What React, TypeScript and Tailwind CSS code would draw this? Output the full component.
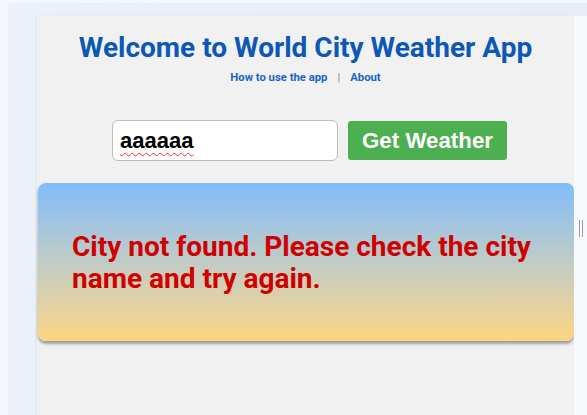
import React from "react";

export default function App() {
  return (
    <div className="w-[587px] h-[415px] overflow-hidden bg-[#f4f7fd] pt-[3px] pl-[8px]" style={{ fontFamily: "Roboto, 'Liberation Sans', sans-serif" }}>
      <div className="h-full bg-gradient-to-r from-[#ebf0f9] to-[#e6ecf8] pt-[13px] pl-[29px] flex">
        <div className="w-[537px] h-[500px] bg-[#f1f1f1] shadow-[-1px_0_2px_rgba(0,0,0,0.06)] flex flex-col items-center">
          <h1 className="mt-[15px] text-[28px] leading-[34px] font-bold text-[#0b58b6]" style={{ fontFamily: "Roboto, sans-serif" }}>
            Welcome to World City Weather App
          </h1>
          <div className="mt-[6px] flex items-center text-[11.3px] leading-[14px] font-bold text-[#1a63cc]">
            <span>How to use the app</span>
            <span className="mx-[10px] text-[#888] font-normal">|</span>
            <span>About</span>
          </div>
          <div className="mt-[35px] flex items-center gap-[10px] pl-[8px]" style={{ fontFamily: "'Liberation Sans', Arial, sans-serif" }}>
            <div className="w-[226px] h-[41px] bg-white border border-[#bdbdbd] rounded-[6px] flex items-center px-[7px]">
              <span className="text-[22px] font-bold text-black underline decoration-wavy decoration-[#e33] decoration-1 underline-offset-[4px]">aaaaaa</span>
            </div>
            <div className="w-[159px] h-[39px] bg-[#4caf50] rounded-[3px] flex items-center justify-center text-white font-bold text-[22.3px]">
              Get Weather
            </div>
          </div>
          <div className="mt-[22px] self-stretch ml-[1px] h-[158px] rounded-[8px] bg-gradient-to-b from-[#7fbcfa] to-[#fdd580] shadow-[0_3px_3px_rgba(0,0,0,0.35)] flex items-center pl-[34px] pr-[20px]">
            <p className="mt-[2px] text-[28px] leading-[32px] font-bold text-[#d10000]">
              City not found. Please check the city name and try again.
            </p>
          </div>
        </div>
        <div className="flex-1 bg-[#f7f9fd] relative">
          <div className="absolute left-[5px] top-[204px] w-[4px] h-[17px] border-l border-r border-[#999]" />
        </div>
      </div>
    </div>
  );
}
